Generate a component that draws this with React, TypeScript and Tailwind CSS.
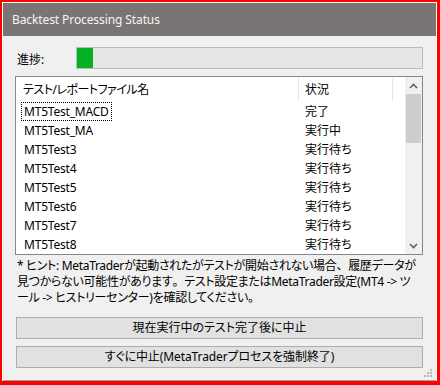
import React from 'react';

const rows = [
  { name: 'MT5Test_MACD', status: '完了' },
  { name: 'MT5Test_MA', status: '実行中' },
  { name: 'MT5Test3', status: '実行待ち' },
  { name: 'MT5Test4', status: '実行待ち' },
  { name: 'MT5Test5', status: '実行待ち' },
  { name: 'MT5Test6', status: '実行待ち' },
  { name: 'MT5Test7', status: '実行待ち' },
  { name: 'MT5Test8', status: '実行待ち' },
];

const font = "[font-family:'Noto_Sans','Noto_Sans_CJK_JP',sans-serif] [font-feature-settings:'palt']";

// full-width punctuation, as in the original dialog font
const Fw = ({ children }: { children: React.ReactNode }) => (
  <span className="[font-feature-settings:normal]">{children}</span>
);

function ScrollBar() {
  return (
    <div className="flex w-[17px] shrink-0 flex-col bg-[#f0f0f0]">
      <div className="flex h-[17px] items-center justify-center">
        <svg width="9" height="6" viewBox="0 0 9 6">
          <path d="M1 5 L4.5 1.5 L8 5" fill="none" stroke="#606060" strokeWidth="1.6" />
        </svg>
      </div>
      <div className="mx-px h-[49px] bg-[#cdcdcd]" />
      <div className="flex-1" />
      <div className="flex h-[17px] items-center justify-center">
        <svg width="9" height="6" viewBox="0 0 9 6">
          <path d="M1 1 L4.5 4.5 L8 1" fill="none" stroke="#606060" strokeWidth="1.6" />
        </svg>
      </div>
    </div>
  );
}

export default function App() {
  return (
    <div className={`h-[385px] w-[440px] border-b-4 border-l-2 border-r-[3px] border-t-2 border-[#ff0000] bg-white ${font}`}>
      <div className="m-px flex h-[378px] flex-col border-b border-[#a0a0a0] bg-[#f0f0f0]">
        <div className="flex h-[33px] items-center bg-[#7a7574] pl-[9px] text-[12px] tracking-[-0.1px] text-[#f4f4f4]">
          Backtest Processing Status
        </div>

        <div className="flex flex-1 flex-col pl-[12px] pr-[13px]">
          <div className="mt-[11px] flex items-end">
            <span className="w-[61px] pl-[2px] pb-[1px] text-[12px] leading-[16px] text-black">進捗:</span>
            <div className="flex h-[22px] flex-1 border border-[#bcbcbc] bg-[#e6e6e6]">
              <div className="w-[16px] bg-[#06b025]" />
            </div>
          </div>

          <div className="mt-[7px] flex h-[179px] border border-[#828790] bg-white text-[12px] text-black">
            <div className="flex flex-1 flex-col">
              <div className="flex h-[25px]">
                <div className="flex w-[282px] items-center pl-[7px] pt-[1px] tracking-[-0.5px]">
                  テスト/レポートファイル名
                </div>
                <div className="my-px w-px bg-[#e5e5e5]" />
                <div className="flex w-[93px] items-center pl-[6px] pt-[1px]">状況</div>
                <div className="my-px w-px bg-[#e5e5e5]" />
              </div>
              {rows.map((r, i) => (
                <div key={r.name} className="flex h-[19px] items-center">
                  <div className="w-[283px] pl-[5px]">
                    <span
                      className={`inline-block px-[2px] leading-[17px] tracking-[-0.2px] ${
                        i === 0 ? 'border border-dotted border-black' : 'border border-transparent'
                      }`}
                    >
                      {r.name}
                    </span>
                  </div>
                  <div className="pl-[6px]">{r.status}</div>
                </div>
              ))}
            </div>
            <ScrollBar />
          </div>

          <p className="mt-[3px] pl-[2px] text-[12px] leading-[16px] tracking-[-0.3px] text-black">
            * ヒント: MetaTraderが起動されたがテストが開始されない場合<Fw>、</Fw>履歴データが
            <br />
            見つからない可能性があります<Fw>。</Fw>テスト設定またはMetaTrader設定(MT4 -&gt; ツ
            <br />
            ール -&gt; ヒストリーセンター)を確認してください<Fw>。</Fw>
          </p>

          <button
            type="button"
            className="ml-px mt-[11px] h-[22px] border border-[#adadad] bg-[#e1e1e1] text-[12px] text-black"
          >
            現在実行中のテスト完了後に中止
          </button>
          <button
            type="button"
            className="ml-px mt-[7px] h-[22px] border border-[#adadad] bg-[#e1e1e1] text-[12px] tracking-[-0.1px] text-black"
          >
            すぐに中止(MetaTraderプロセスを強制終了)
          </button>

          <div className="flex flex-1 items-end justify-end pb-[2px]">
            <svg width="10" height="10" viewBox="0 0 10 10" className="-mr-[10px]">
              <rect x="7" y="1" width="2" height="2" fill="#b8b8b8" />
              <rect x="4" y="4" width="2" height="2" fill="#b8b8b8" />
              <rect x="7" y="4" width="2" height="2" fill="#b8b8b8" />
              <rect x="1" y="7" width="2" height="2" fill="#b8b8b8" />
              <rect x="4" y="7" width="2" height="2" fill="#b8b8b8" />
              <rect x="7" y="7" width="2" height="2" fill="#b8b8b8" />
            </svg>
          </div>
        </div>
      </div>
    </div>
  );
}
